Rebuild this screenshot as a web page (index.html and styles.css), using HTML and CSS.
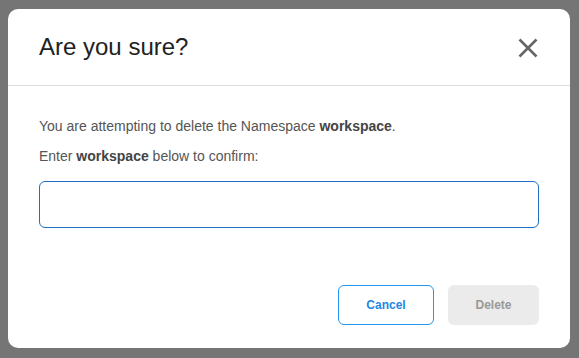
FILE: index.html
```html
<!DOCTYPE html>
<html lang="en">
<head>
  <meta charset="UTF-8">
  <title>Delete namespace</title>
  <link rel="stylesheet" href="styles.css">
</head>
<body>
  <div class="modal">
    <div class="modal-header">
      <h2>Are you sure?</h2>
      <button class="close" aria-label="Close">
        <svg width="20" height="20" viewBox="0 0 20 20">
          <path d="M1.5 1.5 L18.5 18.5 M18.5 1.5 L1.5 18.5" stroke="#666" stroke-width="2.6" fill="none"/>
        </svg>
      </button>
    </div>
    <div class="modal-body">
      <p>You are attempting to delete the Namespace <b>workspace</b>.</p>
      <p>Enter <b>workspace</b> below to confirm:</p>
      <input class="confirm-input" type="text">
    </div>
    <div class="modal-footer">
      <button class="btn btn-cancel">Cancel</button>
      <button class="btn btn-delete" disabled>Delete</button>
    </div>
  </div>
</body>
</html>
```

FILE: styles.css
```css
body {
  margin: 0;
  padding: 9px 9px 10px 8px;
  background: #757575;
  font-family: "Liberation Sans", Arial, sans-serif;
}
.modal {
  width: 562px;
  height: 339px;
  background: #fff;
  border-radius: 10px;
  display: flex;
  flex-direction: column;
}
.modal-header {
  height: 76px;
  border-bottom: 1px solid #dedede;
  display: flex;
  align-items: center;
  justify-content: space-between;
  padding: 0 32px 0 31px;
}
.modal-header h2 {
  margin: 0;
  font-size: 24px;
  font-weight: 400;
  color: #222;
}
.close {
  border: none;
  background: none;
  padding: 0;
  width: 20px;
  height: 20px;
  margin-top: 2px;
}
.modal-body {
  padding: 32px 31px 0 31px;
}
.modal-body p {
  margin: 0 0 14px 0;
  font-size: 14px;
  line-height: 16px;
  color: #555;
}
.modal-body b {
  color: #444;
}
.confirm-input {
  display: block;
  box-sizing: border-box;
  width: 500px;
  height: 47px;
  margin-top: 17px;
  border: 1px solid #1f6fc5;
  border-radius: 6px;
  outline: none;
}
.modal-footer {
  display: flex;
  justify-content: flex-end;
  gap: 14px;
  padding: 57px 31px 0 0;
}
.btn {
  height: 40px;
  border-radius: 6px;
  font-family: "Liberation Sans", Arial, sans-serif;
  font-size: 12px;
  font-weight: 700;
}
.btn-cancel {
  width: 96px;
  background: #fff;
  border: 1px solid #2196f3;
  color: #1e88e5;
}
.btn-delete {
  width: 91px;
  background: #ebebeb;
  border: none;
  color: #999;
}
```
